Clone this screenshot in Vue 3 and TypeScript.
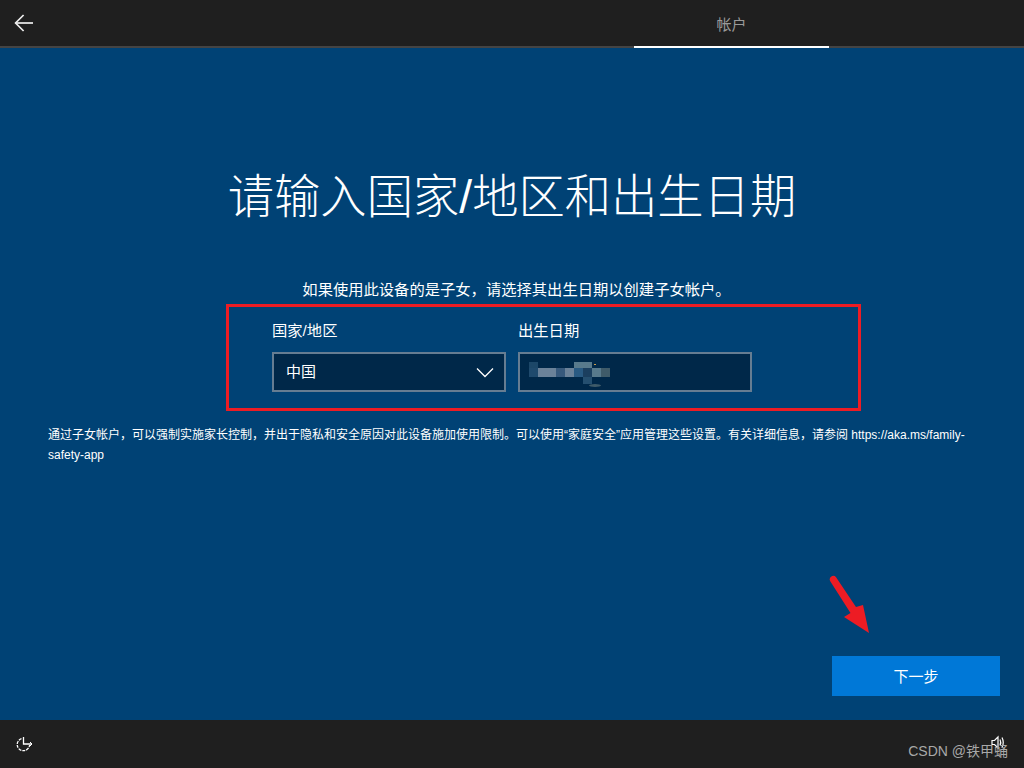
<script setup lang="ts">
// pixelated patch that hides the birth date: [x, y, w, h, colour]
const patches: [number, number, number, number, string][] = [
  [0, 6, 9, 6, "#1c4768"],
  [0, 12, 9, 9, "#1f4a6d"],
  [9, 12, 18, 9, "#6b8299"],
  [27, 12, 9, 9, "#37597c"],
  [36, 12, 9, 9, "#6b8299"],
  [45, 6, 18, 6, "#587a8c"],
  [45, 12, 9, 9, "#295a82"],
  [54, 12, 9, 9, "#1b3f5f"],
  [54, 21, 9, 7, "#254f6f"],
  [63, 12, 9, 9, "#587a8c"],
  [72, 12, 9, 9, "#3f5b69"],
  [65, 8, 2, 1, "#c89a4a"],
];
</script>

<template>
  <div class="oobe">
    <header class="topbar">
      <button class="back" aria-label="返回">
        <svg width="20" height="18" viewBox="0 0 20 18" fill="none" stroke="#eee" stroke-width="1.7">
          <path d="M9.6 1 L1.6 9 L9.6 17" />
          <path d="M1.6 9 H19" />
        </svg>
      </button>
      <div class="tab">帐户</div>
    </header>

    <main class="content">
      <h1>请输入国家/地区和出生日期</h1>
      <p class="lead">如果使用此设备的是子女，请选择其出生日期以创建子女帐户。</p>

      <div class="form-box">
        <div class="field">
          <label>国家/地区</label>
          <div class="control">
            <span class="value">中国</span>
            <svg class="chevron" width="18" height="11" viewBox="0 0 18 11" fill="none" stroke="#fff" stroke-width="1.3">
              <path d="M1 1.5 L9 9.5 L17 1.5" />
            </svg>
          </div>
        </div>
        <div class="field">
          <label>出生日期</label>
          <div class="control">
            <svg class="blur" width="82" height="32" viewBox="0 0 82 32">
              <rect v-for="(p, i) in patches" :key="i" :x="p[0]" :y="p[1]" :width="p[2]" :height="p[3]" :fill="p[4]" />
              <ellipse cx="66" cy="29.5" rx="6" ry="1.5" fill="#3f5b69" />
            </svg>
          </div>
        </div>
      </div>

      <p class="note">通过子女帐户，可以强制实施家长控制，并出于隐私和安全原因对此设备施加使用限制。可以使用“家庭安全”应用管理这些设置。有关详细信息，请参阅 https://aka.ms/family-safety-app</p>

      <div class="actions">
        <button class="next"><span>下一步</span></button>
      </div>

      <svg class="arrow" width="42" height="62" viewBox="0 0 42 62" fill="#ed1c24">
        <path d="M6.9 3.1 L27 33 L34 31 L40 59 L15 43 L21.5 39 L1.1 6.9 A3.5 3.5 0 0 1 6.9 3.1 Z" />
      </svg>
    </main>

    <footer class="bottombar">
      <svg width="18" height="18" viewBox="0 0 18 18" fill="none" stroke="#fff" stroke-width="1.3">
        <path d="M6.5 3.6 A6.2 6.2 0 1 0 14.6 10" stroke-dasharray="3 1" />
        <path d="M8.5 2 V9 H17" />
        <path d="M15 7 L17 9 L15 11" stroke-width="1" />
      </svg>
      <svg class="speaker" width="14" height="15" viewBox="0 0 14 15" fill="none" stroke="#fff" stroke-width="1.2">
        <path d="M1 5.5 H3.5 L7 2 V13 L3.5 9.5 H1 Z" />
        <path d="M9 4.5 Q10.5 7.5 9 10.5" />
        <path d="M11 2.5 Q13.5 7.5 11 12.5" />
      </svg>
      <span class="watermark">CSDN @铁甲蛹</span>
    </footer>
  </div>
</template>

<style>
html, body {
  margin: 0;
  background: #004275;
}
</style>

<style scoped>
.oobe {
  display: flex;
  flex-direction: column;
  width: 1024px;
  height: 768px;
  overflow: hidden;
  background: #004275;
  color: #fff;
  font-family: "Liberation Sans", "Noto Sans CJK SC", sans-serif;
}

.topbar {
  display: flex;
  flex: none;
  justify-content: space-between;
  height: 46px;
  padding-right: 195px;
  background: #1f1f1f;
  border-bottom: 2px solid #444;
}

.back {
  display: flex;
  align-items: center;
  justify-content: center;
  width: 48px;
  height: 46px;
  padding: 0;
  background: none;
  border: 0;
}

.tab {
  width: 195px;
  height: 46px;
  margin-bottom: -2px;
  border-bottom: 2px solid #fff;
  color: #9a9a9a;
  font-size: 15px;
  line-height: 49px;
  text-align: center;
}

.content {
  position: relative;
  display: flex;
  flex: 1;
  flex-direction: column;
  align-items: center;
}

h1 {
  margin: 117px 0 0;
  font-size: 46.3px;
  font-weight: 300;
  line-height: 64px;
}

.lead {
  margin: 51px 0 0 9px;
  font-size: 15.3px;
  line-height: 20px;
}

.form-box {
  display: flex;
  gap: 12px;
  box-sizing: border-box;
  width: 635px;
  height: 107px;
  margin: 4px 0 0 63px;
  padding: 14px 43px;
  border: 3px solid #ed1c24;
}

.field {
  display: flex;
  flex-direction: column;
  width: 234px;
}

label {
  height: 31px;
  font-size: 15.3px;
  line-height: 20px;
}

.control {
  display: flex;
  align-items: center;
  justify-content: space-between;
  box-sizing: border-box;
  height: 40px;
  padding: 0 10px 0 12px;
  background: #002849;
  border: 2px solid #667d92;
  font-size: 15px;
}

.value {
  margin-top: -3px;
}

.blur {
  margin-left: -3px;
}

.note {
  align-self: flex-start;
  width: 930px;
  margin: 14px 0 0 48px;
  font-size: 12px;
  line-height: 20px;
}

.actions {
  display: flex;
  justify-content: flex-end;
  align-self: stretch;
  margin-top: auto;
  padding: 0 24px 24px 0;
}

.next {
  width: 168px;
  height: 40px;
  padding: 0 0 2px;
  background: #0078d7;
  border: 0;
  color: #fff;
  font-family: inherit;
  font-size: 15px;
}

.arrow {
  position: absolute;
  top: 526px;
  left: 829px;
}

.bottombar {
  position: relative;
  display: flex;
  flex: none;
  align-items: center;
  justify-content: space-between;
  box-sizing: border-box;
  height: 48px;
  padding: 0 19px 0 15px;
  background: #1f1f1f;
}

.speaker {
  margin-top: -3px;
}

.watermark {
  position: absolute;
  right: 16px;
  bottom: 8px;
  color: #a8a8a8;
  font-size: 14px;
}
</style>
